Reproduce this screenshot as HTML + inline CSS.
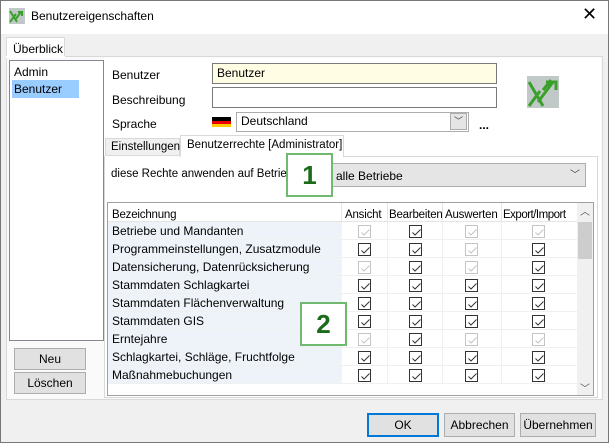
<!DOCTYPE html>
<html><head><meta charset="utf-8"><style>
*{margin:0;padding:0;box-sizing:border-box}
body{width:609px;height:443px;overflow:hidden;font-family:"Liberation Sans",sans-serif;font-size:12px;color:#000;background:#f0f0f0;position:relative}
.a{position:absolute}
.win{left:0;top:0;width:609px;height:443px;border:1px solid #777}
.btn{position:absolute;background:#e1e1e1;border:1px solid #adadad;text-align:center;line-height:19px}
.inp{position:absolute;background:#fff;border:1px solid #7a7a7a;padding-left:4px;line-height:17px}
.cb{position:absolute;width:13px;height:13px;border:1px solid #333;background:#fff}
.cb.d{border-color:#c4c4c4}
.cb svg{position:absolute;left:1px;top:1px}
.row{position:absolute;left:108px;width:469px;height:18px;border-bottom:1px solid #f0f0f0}
.row .t{position:absolute;left:0;top:0;width:234px;height:17px;background:#eef3fa;padding-left:4px;line-height:19px}
.vl{position:absolute;top:0;width:1px;height:18px;background:#f0f0f0}
.hd{position:absolute;top:209px;font-size:11.5px;letter-spacing:-0.2px}
.gb{position:absolute;border:2px solid #6fba6f;background:#fff;color:#1a6b1a;font-weight:bold;font-size:26px;text-align:center}
</style></head><body>
<div class="a win"></div>
<div class="a" style="left:1px;top:1px;width:607px;height:33px;background:#fff"></div>
<svg class="a" style="left:9px;top:8px" width="16" height="16" viewBox="0 0 16 16"><rect width="16" height="16" fill="#c0c8c8"/><path d="M1 3 L8 14 M1 14 L7 6 M6 12 L12 4 M9 4 H13 V8" stroke="#3aa02a" stroke-width="2" fill="none"/></svg>
<div class="a" style="left:31px;top:9px;font-size:12px">Benutzereigenschaften</div>
<div class="a" style="left:582px;top:4px;font-size:18px;font-weight:300">✕</div>

<div class="a" style="left:6px;top:37px;width:59px;height:20px;background:#fff;border:1px solid #d9d9d9;border-bottom:none;padding:4px 0 0 6px">Überblick</div>
<div class="a" style="left:6px;top:56px;width:597px;height:344px;background:#fafafa;border:1px solid #d9d9d9"></div>
<div class="a" style="left:6px;top:56px;width:59px;height:2px;background:#fff"></div>

<div class="a" style="left:9px;top:60px;width:95px;height:281px;background:#fff;border:1px solid #828790"></div>
<div class="a" style="left:14px;top:65px">Admin</div>
<div class="a" style="left:12px;top:80px;width:67px;height:18px;background:#99ccff;padding:2px 0 0 2px">Benutzer</div>
<div class="btn" style="left:14px;top:348px;width:72px;height:22px;line-height:20px">Neu</div>
<div class="btn" style="left:14px;top:372px;width:72px;height:22px;line-height:20px">Löschen</div>

<div class="a" style="left:104px;top:58px;width:497px;height:340px;background:#fff"></div>
<div class="a" style="left:112px;top:68px">Benutzer</div>
<div class="a" style="left:112px;top:93px">Beschreibung</div>
<div class="a" style="left:112px;top:117px">Sprache</div>
<div class="inp" style="left:212px;top:63px;width:285px;height:21px;background:#fffde3;line-height:18px">Benutzer</div>
<div class="inp" style="left:212px;top:87px;width:285px;height:21px"></div>
<div class="a" style="left:212px;top:117px;width:19px;height:4px;background:#000"></div>
<div class="a" style="left:212px;top:121px;width:19px;height:3px;background:#e00"></div>
<div class="a" style="left:212px;top:124px;width:19px;height:3px;background:#fc0"></div>
<div class="inp" style="left:236px;top:112px;width:233px;height:20px;border-color:#adadad;line-height:17px">Deutschland</div>
<div class="a" style="left:450px;top:113px;width:17px;height:17px;background:#e5e5e5;border:1px solid #adadad;text-align:center;font-size:9px;line-height:15px;color:#444">﹀</div>
<div class="a" style="left:479px;top:118px;font-weight:bold">...</div>
<svg class="a" style="left:527px;top:76px" width="32" height="32" viewBox="0 0 32 32"><rect width="32" height="32" fill="#c0c8c8"/><path d="M2 6 L16 30 M2 30 L13 15 M11 26 L26 6 M19 6 H29 V14 M16 14 L24 4" stroke="#3aa02a" stroke-width="3" fill="none"/></svg>

<div class="a" style="left:105px;top:138px;width:75px;height:18px;background:#f0f0f0;border:1px solid #d9d9d9;padding:2px 0 0 5px;font-size:11.5px">Einstellungen</div>
<div class="a" style="left:180px;top:135px;width:164px;height:22px;background:#fff;border:1px solid #d9d9d9;border-bottom:none;padding:3px 0 0 6px;font-size:11.5px">Benutzerrechte [Administrator]</div>
<div class="a" style="left:104px;top:156px;width:494px;height:242px;border:1px solid #d9d9d9;border-top:none"></div>
<div class="a" style="left:344px;top:156px;width:254px;height:1px;background:#d9d9d9"></div>
<div class="a" style="left:111px;top:168px;font-size:11.5px">diese Rechte anwenden auf Betrieb</div>
<div class="a" style="left:330px;top:163px;width:256px;height:24px;background:#e5e5e5;border:1px solid #adadad;padding:5px 0 0 5px">alle Betriebe</div>
<div class="a" style="left:570px;top:166px;font-size:10px;color:#444">﹀</div>
<div class="gb" style="left:286px;top:153px;width:47px;height:44px;line-height:40px">1</div>

<div class="a" style="left:107px;top:202px;width:487px;height:194px;border:1px solid #a0a0a0;background:#fff"></div>
<div class="a" style="left:108px;top:203px;width:469px;height:19px;border-bottom:1px solid #e5e5e5"></div>
<div class="hd" style="left:112px">Bezeichnung</div>
<div class="a" style="left:341px;top:203px;width:1px;height:19px;background:#e5e5e5"></div>
<div class="hd" style="left:345px">Ansicht</div>
<div class="a" style="left:387px;top:203px;width:1px;height:19px;background:#e5e5e5"></div>
<div class="hd" style="left:389px">Bearbeiten</div>
<div class="a" style="left:442px;top:203px;width:1px;height:19px;background:#e5e5e5"></div>
<div class="hd" style="left:445px">Auswerten</div>
<div class="a" style="left:501px;top:203px;width:1px;height:19px;background:#e5e5e5"></div>
<div class="hd" style="left:503px;letter-spacing:-0.5px">Export/Import</div>
<div class="a" style="left:577px;top:203px;width:16px;height:192px;background:#f0f0f0"></div>
<div class="a" style="left:578px;top:222px;width:14px;height:37px;background:#cdcdcd"></div>
<div class="a" style="left:580px;top:203px;font-size:10px;color:#555">︿</div>
<div class="a" style="left:580px;top:380px;font-size:10px;color:#555">﹀</div>

<div id="rows"></div>
<div class="gb" style="left:300px;top:302px;width:47px;height:44px;line-height:40px">2</div>

<div class="btn" style="left:367px;top:413px;width:72px;height:24px;border:2px solid #0078d7;line-height:20px">OK</div>
<div class="btn" style="left:444px;top:413px;width:71px;height:24px;line-height:22px">Abbrechen</div>
<div class="btn" style="left:520px;top:413px;width:76px;height:24px;line-height:22px">Übernehmen</div>

<script>
var names=["Betriebe und Mandanten","Programmeinstellungen, Zusatzmodule","Datensicherung, Datenrücksicherung","Stammdaten Schlagkartei","Stammdaten Flächenverwaltung","Stammdaten GIS","Erntejahre","Schlagkartei, Schläge, Fruchtfolge","Maßnahmebuchungen"];
var st=["dcdd","ccdc","dcdc","cccc","cccc","cccc","dcdd","cccc","cccc"];
var xs=[358,409,465,532];
var h="";
for(var i=0;i<9;i++){var y=222+i*18;
h+='<div class="row" style="top:'+y+'px"><div class="t">'+names[i]+'</div><div class="vl" style="left:279px"></div><div class="vl" style="left:334px"></div><div class="vl" style="left:393px"></div></div>';
for(var j=0;j<4;j++){var d=st[i][j]=="d";
h+='<div class="cb'+(d?' d':'')+'" style="left:'+xs[j]+'px;top:'+(y+3)+'px"><svg width="11" height="11"><path d="M1.5 5.5 L4 8 L9.5 2.5" stroke="'+(d?'#c4c4c4':'#333')+'" stroke-width="1" fill="none"/></svg></div>';}
}
document.getElementById("rows").innerHTML=h;
</script>
</body></html>
